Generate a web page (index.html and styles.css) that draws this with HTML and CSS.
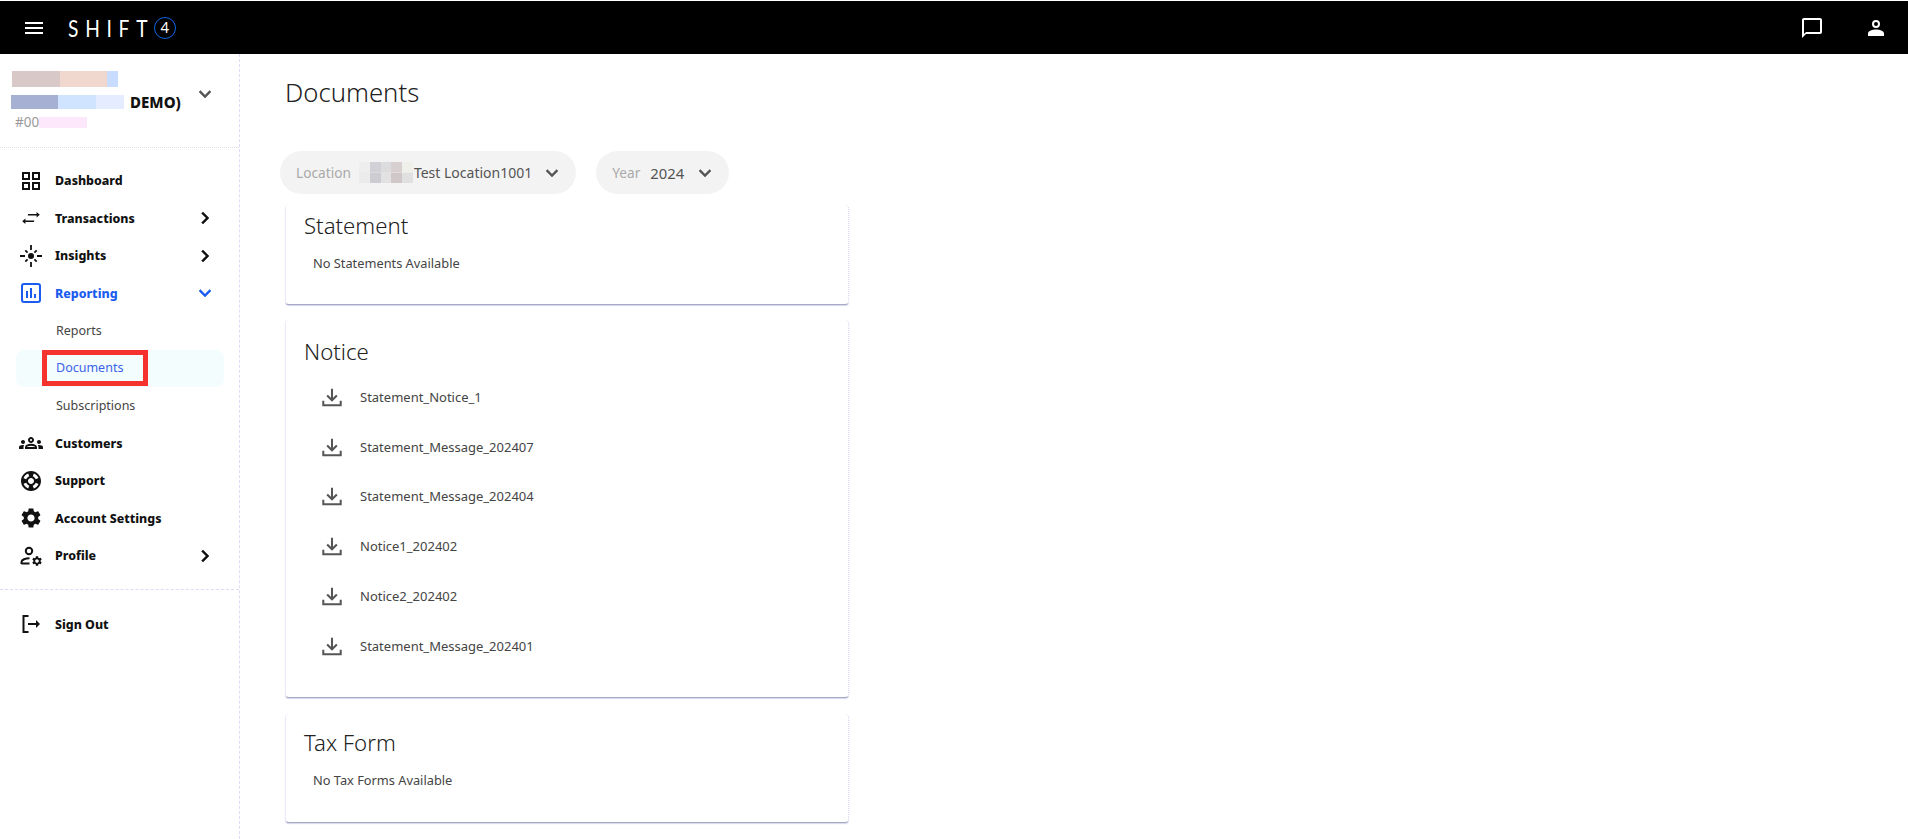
FILE: index.html
```html
<!DOCTYPE html>
<html lang="en">
<head>
<meta charset="utf-8">
<title>Documents</title>
<link rel="stylesheet" href="styles.css">
</head>
<body>
<svg class="defs" width="0" height="0" aria-hidden="true">
  <symbol id="chev-down" viewBox="0 0 24 24"><path d="M7.41 8.59 12 13.17l4.59-4.58L18 10l-6 6-6-6z"/></symbol>
  <symbol id="chev-right" viewBox="0 0 24 24"><path d="M8.59 16.59 13.17 12 8.59 7.41 10 6l6 6-6 6z"/></symbol>
  <symbol id="dl" viewBox="0 0 24 24"><path d="M12 3v12.500M6.700 10.300l5.300 5.300 5.300-5.300M2.500 16v5h19v-5" fill="none" stroke="currentColor" stroke-width="2.200"/></symbol>
  <symbol id="gear" viewBox="0 0 24 24"><path d="M19.14,12.94c0.04-0.3,0.06-0.61,0.06-0.94c0-0.32-0.02-0.64-0.07-0.94l2.03-1.58c0.18-0.14,0.23-0.41,0.12-0.61 l-1.92-3.32c-0.12-0.22-0.37-0.29-0.59-0.22l-2.39,0.96c-0.5-0.38-1.03-0.7-1.62-0.94L14.4,2.81c-0.04-0.24-0.24-0.41-0.48-0.41 h-3.84c-0.24,0-0.43,0.17-0.47,0.41L9.25,5.35C8.66,5.59,8.12,5.92,7.63,6.29L5.24,5.33c-0.22-0.08-0.47,0-0.59,0.22L2.74,8.87 C2.62,9.08,2.66,9.34,2.86,9.48l2.03,1.58C4.84,11.36,4.8,11.69,4.8,12s0.02,0.64,0.07,0.94l-2.03,1.58 c-0.18,0.14-0.23,0.41-0.12,0.61l1.92,3.32c0.12,0.22,0.37,0.29,0.59,0.22l2.39-0.96c0.5,0.38,1.03,0.7,1.62,0.94l0.36,2.54 c0.05,0.24,0.24,0.41,0.48,0.41h3.84c0.24,0,0.44-0.17,0.47-0.41l0.36-2.54c0.59-0.24,1.13-0.56,1.62-0.94l2.39,0.96 c0.22,0.08,0.47,0,0.59-0.22l1.92-3.32c0.12-0.22,0.07-0.47-0.12-0.61L19.14,12.94z M12,15.6c-1.98,0-3.6-1.62-3.6-3.6 s1.62-3.6,3.6-3.6s3.6,1.62,3.6,3.6S13.98,15.6,12,15.6z"/></symbol>
</svg>

<header class="topbar">
  <svg class="ico-menu" viewBox="0 0 24 24"><path d="M3 18h18v-2H3v2zm0-5h18v-2H3v2zm0-7v2h18V6H3z"/></svg>
  <div class="logo">
    <span class="logo-word">SHIFT</span>
    <span class="logo-four">4</span>
  </div>
  <div class="top-actions">
    <svg class="ico-top" viewBox="0 0 24 24"><path d="M20 2H4c-1.100 0-2 .9-2 2v18l4-4h14c1.100 0 2-.9 2-2V4c0-1.100-.9-2-2-2zm0 14H6l-2 2V4h16v12z"/></svg>
    <svg class="ico-top" viewBox="0 0 24 24"><path fill-rule="evenodd" d="M12 4a4 4 0 1 0 0 8 4 4 0 0 0 0-8zm0 2a2 2 0 1 1 0 4 2 2 0 0 1 0-4z"/><path d="M12 13.500c-3.200 0-8 1.400-8 3.800V20h16v-2.700c0-2.400-4.800-3.800-8-3.800z"/></svg>
  </div>
</header>

<div class="shell">
  <aside class="sidebar">
    <div class="account">
      <div class="acct-text">
        <div class="blur blur-a"></div>
        <div class="acct-line"><span class="blur blur-b"></span><span class="acct-demo">DEMO)</span></div>
        <div class="acct-id"><span>#00</span><span class="blur blur-c"></span></div>
      </div>
      <svg class="chev chev-acct"><use href="#chev-down"/></svg>
    </div>

    <nav class="nav">
      <a class="row">
        <svg class="ico" viewBox="0 0 24 24"><path d="M3 3v8h8V3H3zm6 6H5V5h4v4zm-6 4v8h8v-8H3zm6 6H5v-4h4v4zm4-16v8h8V3h-8zm6 6h-4V5h4v4zm-6 4v8h8v-8h-8zm6 6h-4v-4h4v4z"/></svg>
        <span class="label">Dashboard</span>
      </a>
      <a class="row">
        <svg class="ico" viewBox="-3 -3 30 30"><path d="M23 8l-4-3.500V7H8.500l-.7 2H19v2.500L23 8zM1 16l4 3.500V17h10.500l.7-2H5v-2.500L1 16z"/></svg>
        <span class="label">Transactions</span>
        <svg class="chev"><use href="#chev-right"/></svg>
      </a>
      <a class="row">
        <svg class="ico" viewBox="0 0 24 24"><circle cx="12" cy="12" r="3"/><path d="M12 1v5M12 18v5M1 12h5M18 12h5M6.300 6.300l2.300 2.300M15.400 15.400l2.300 2.300M17.700 6.300l-2.300 2.300M8.600 15.400l-2.300 2.300" fill="none" stroke="currentColor" stroke-width="1.800"/></svg>
        <span class="label">Insights</span>
        <svg class="chev"><use href="#chev-right"/></svg>
      </a>
      <a class="row row-active">
        <svg class="ico" viewBox="0 0 24 24"><rect x="3" y="3" width="18" height="18" rx="2" fill="none" stroke="currentColor" stroke-width="2"/><path d="M7 10h2v7H7zM11 7h2v10h-2zM15 13h2v4h-2z"/></svg>
        <span class="label">Reporting</span>
        <svg class="chev"><use href="#chev-down"/></svg>
      </a>
      <a class="row row-sub"><span class="sublabel">Reports</span></a>
      <a class="row row-sub row-current">
        <span class="sublabel">Documents</span>
        <span class="callout"></span>
      </a>
      <a class="row row-sub"><span class="sublabel">Subscriptions</span></a>
      <a class="row">
        <svg class="ico" viewBox="0 0 24 24"><path d="M4 13c1.100 0 2-.9 2-2s-.9-2-2-2-2 .9-2 2 .9 2 2 2zm1.130 1.100c-.37-.06-.74-.1-1.130-.1-.99 0-1.930.21-2.780.58C.48 14.900 0 15.620 0 16.430V18h4.500v-1.610c0-.83.23-1.610.63-2.290zM20 13c1.100 0 2-.9 2-2s-.9-2-2-2-2 .9-2 2 .9 2 2 2zm4 3.430c0-.81-.48-1.530-1.220-1.850-.85-.37-1.790-.58-2.780-.58-.39 0-.76.04-1.130.1.4.68.63 1.460.63 2.290V18H24v-1.570zm-7.760-2.780c-1.170-.52-2.610-.9-4.240-.9s-3.070.39-4.240.9C6.680 14.130 6 15.210 6 16.390V18h12v-1.610c0-1.180-.68-2.260-1.760-2.740zM8.070 16c.09-.23.13-.39.91-.69.97-.38 1.990-.56 3.020-.56s2.050.18 3.020.56c.77.3.81.46.91.69H8.070zM12 8c.55 0 1 .45 1 1s-.45 1-1 1-1-.45-1-1 .45-1 1-1m0-2c-1.660 0-3 1.340-3 3s1.340 3 3 3 3-1.340 3-3-1.340-3-3-3z"/></svg>
        <span class="label">Customers</span>
      </a>
      <a class="row">
        <svg class="ico" viewBox="0 0 24 24"><path d="M12 2C6.480 2 2 6.480 2 12s4.480 10 10 10 10-4.480 10-10S17.520 2 12 2zm7.460 7.120-2.780 1.150c-.51-1.360-1.580-2.440-2.950-2.940l1.150-2.780c2.100.8 3.770 2.470 4.580 4.570zM12 15c-1.660 0-3-1.340-3-3s1.340-3 3-3 3 1.340 3 3-1.340 3-3 3zM9.130 4.540l1.170 2.780c-1.380.5-2.470 1.590-2.980 2.970L4.540 9.130c.81-2.110 2.480-3.780 4.590-4.590zM4.540 14.870l2.780-1.150c.51 1.380 1.590 2.460 2.970 2.960l-1.170 2.780c-2.100-.81-3.770-2.480-4.580-4.590zm10.340 4.590-1.150-2.780c1.370-.51 2.450-1.590 2.950-2.970l2.780 1.170c-.81 2.100-2.480 3.770-4.580 4.580z"/></svg>
        <span class="label">Support</span>
      </a>
      <a class="row">
        <svg class="ico"><use href="#gear"/></svg>
        <span class="label">Account Settings</span>
      </a>
      <a class="row">
        <svg class="ico" viewBox="0 0 24 24"><circle cx="10" cy="7" r="3.200" fill="none" stroke="currentColor" stroke-width="2"/><path d="M2.500 20v-2c0-2.200 4-3.800 8-3.800M2.500 19.500h8" fill="none" stroke="currentColor" stroke-width="2"/><use href="#gear" x="12" y="11" width="12" height="12"/></svg>
        <span class="label">Profile</span>
        <svg class="chev"><use href="#chev-right"/></svg>
      </a>
    </nav>

    <div class="signout">
      <a class="row">
        <svg class="ico" viewBox="0 0 24 24"><path d="M9.500 4H4.500v16h5" fill="none" stroke="currentColor" stroke-width="2"/><path d="M9 11h8V8l4 4-4 4v-3H9z"/></svg>
        <span class="label">Sign Out</span>
      </a>
    </div>
  </aside>

  <main class="main">
    <h1 class="page-title">Documents</h1>
    <div class="filters">
      <div class="chip">
        <span class="chip-key">Location</span>
        <span class="mosaic"></span>
        <span class="chip-val">Test Location1001</span>
        <svg class="chev chev-chip"><use href="#chev-down"/></svg>
      </div>
      <div class="chip chip-year">
        <span class="chip-key">Year</span>
        <span class="chip-val">2024</span>
        <svg class="chev chev-chip"><use href="#chev-down"/></svg>
      </div>
    </div>

    <section class="card card-statement">
      <h2 class="card-title">Statement</h2>
      <p class="empty">No Statements Available</p>
    </section>

    <section class="card card-notice">
      <h2 class="card-title">Notice</h2>
      <ul class="doc-list">
        <li class="doc"><svg class="ico-dl"><use href="#dl"/></svg><span>Statement_Notice_1</span></li>
        <li class="doc"><svg class="ico-dl"><use href="#dl"/></svg><span>Statement_Message_202407</span></li>
        <li class="doc"><svg class="ico-dl"><use href="#dl"/></svg><span>Statement_Message_202404</span></li>
        <li class="doc"><svg class="ico-dl"><use href="#dl"/></svg><span>Notice1_202402</span></li>
        <li class="doc"><svg class="ico-dl"><use href="#dl"/></svg><span>Notice2_202402</span></li>
        <li class="doc"><svg class="ico-dl"><use href="#dl"/></svg><span>Statement_Message_202401</span></li>
      </ul>
    </section>

    <section class="card card-tax">
      <h2 class="card-title">Tax Form</h2>
      <p class="empty">No Tax Forms Available</p>
    </section>
  </main>
</div>
</body>
</html>
```
FILE: styles.css
```css
* { box-sizing: border-box; }
html, body { margin: 0; height: 100%; background: #fff; overflow: hidden; }
body { font-family: "Noto Sans", "Open Sans", sans-serif; color: #222; padding-top: 1px; }
.defs { display: block; height: 0; position: absolute; }
a { color: inherit; text-decoration: none; }

.topbar { height: 53px; background: #000; color: #fff; display: flex; align-items: center; padding-left: 22px; padding-right: 20px; }
.ico-menu { width: 24px; height: 24px; fill: #fff; }
.logo { display: flex; align-items: center; margin-left: 22px; }
.logo-word { font-family: "Lato", sans-serif; font-weight: 400; font-size: 24px; letter-spacing: 8.400px; line-height: 24px; color: #fff; transform: scaleX(.8); transform-origin: left center; }
.logo-four { width: 22px; height: 22px; margin-left: -22px; border: 1.500px solid #0d66e8; border-radius: 50%; display: flex; align-items: center; justify-content: center; font-family: "Lato", sans-serif; font-weight: 400; font-size: 15px; line-height: 1; color: #fff; }
.top-actions { margin-left: auto; display: flex; gap: 40px; align-items: center; }
.ico-top { width: 24px; height: 24px; fill: #fff; }

.shell { display: flex; height: 785px; }

.sidebar { width: 240px; flex: none; border-right: 1px dashed #dcdcf6; }
.account { height: 94px; border-bottom: 1px dotted #dcdce8; display: flex; padding: 17px 22px 0 12px; position: relative; }
.acct-text { flex: 1; }
.blur { display: block; }
.blur-a { width: 106px; height: 16px; background: linear-gradient(90deg, #d8c8c8 0 45%, #f0d8cf 45% 90%, #c8dcff 90%); }
.acct-line { display: flex; align-items: center; margin-top: 6px; height: 18px; margin-left: -1px; }
.blur-b { width: 113px; height: 14px; background: linear-gradient(90deg, #a6b0d2 0 42%, #d0e4ff 42% 75%, #e6ecff 75%); }
.acct-demo { margin-left: 6px; font-size: 15px; font-weight: 800; color: #111; line-height: 18px; }
.acct-id { display: flex; align-items: center; margin-top: 2px; margin-left: 3px; color: #9a9a9a; font-size: 13.500px; line-height: 18px; }
.blur-c { width: 48px; height: 11px; background: #fde8fb; }
.chev { width: 24px; height: 24px; fill: #222; flex: none; }
.chev-acct { fill: #555; stroke: #555; stroke-width: .5px; margin-top: 11px; }

.nav { padding-top: 14px; padding-bottom: 14px; border-bottom: 1px dashed #dcdcf6; }
.row { display: flex; align-items: center; height: 37.500px; padding-left: 19px; padding-right: 22px; color: #111; position: relative; }
.ico { width: 24px; height: 24px; fill: currentColor; flex: none; }
.label { flex: 1; margin-left: 12px; padding-top: 1px; font-size: 12.400px; font-weight: 800; line-height: 18px; }
.row .chev { fill: #111; stroke: #111; stroke-width: .5px; }
.row-active { color: #1a5cf0; }
.row-active .chev { fill: #1a5cf0; stroke: #1a5cf0; }
.row-sub { padding-left: 56px; color: #444; }
.sublabel { font-size: 12.500px; line-height: 18px; }
.row-current { margin-left: 16px; margin-right: 15px; padding-left: 40px; background: #f4fdfd; border-radius: 8px; color: #3a62e8; }
.callout { position: absolute; left: 26px; top: 0; width: 106px; height: 36px; border: 5px solid #f5322e; }

.signout { padding-top: 16px; }

.main { flex: 1; padding: 0 0 0 45px; }
.page-title { margin: 23px 0 0; font-size: 25.700px; font-weight: 300; line-height: 32px; color: #222; }
.filters { display: flex; gap: 20px; margin: 42px 0 0 -5px; }
.chip { height: 43px; border-radius: 22px; background: #f3f3f3; display: flex; align-items: center; padding: 0 12px 0 16px; font-size: 14px; }
.chip-key { color: #aaa; margin-right: 8px; font-size: 13.700px; }
.chip-val { color: #555; }
.chip-year .chip-key { margin-right: 10px; }
.chip-year .chip-val { font-size: 14.800px; }
.chip-year .chev-chip { margin-left: 9px; }
.mosaic { width: 54px; height: 21px; margin-right: 1px; background-color: #e8e8e8;
  background-image:
    linear-gradient(90deg, #eee 0 20%, #d0d0d6 20% 40%, #dcdcde 40% 60%, #d8d0d0 60% 80%, #f0f0ea 80%),
    linear-gradient(90deg, #ebebeb 0 20%, #ccccd2 20% 40%, #e2e2e2 40% 60%, #d0c8c8 60% 80%, #e0e0e0 80%);
  background-size: 100% 50%; background-position: top, bottom; background-repeat: no-repeat; }
.chev-chip { fill: #555; stroke: #555; stroke-width: .5px; margin-left: 8px; }

.card { width: 564px; background: #fff; border: 1px dotted #d8d8f4; border-top: 0; border-bottom: 1px solid #a9a9c4; border-radius: 4px; box-shadow: 0 1px 1px rgba(120,120,200,.3); padding-left: 18px; }
.card-statement { height: 100px; margin-top: 11px; }
.card-notice { height: 378px; margin-top: 15px; }
.card-tax { height: 109px; margin-top: 16px; }
.card-title { margin: 0; font-size: 22.200px; font-weight: 300; line-height: 28px; color: #222; }
.card-statement .card-title { padding-top: 7px; }
.card-notice .card-title { padding-top: 18px; }
.card-tax .card-title { padding-top: 15px; }
.empty { margin: 14px 0 0 9px; font-size: 12.800px; line-height: 18px; color: #444; }
.doc-list { list-style: none; margin: 6px 0 0; padding: 0; }
.doc { height: 49.800px; display: flex; align-items: center; padding-left: 17px; font-size: 13px; color: #444; }
.ico-dl { width: 22px; height: 22px; color: #555; margin-right: 17px; flex: none; }
```
